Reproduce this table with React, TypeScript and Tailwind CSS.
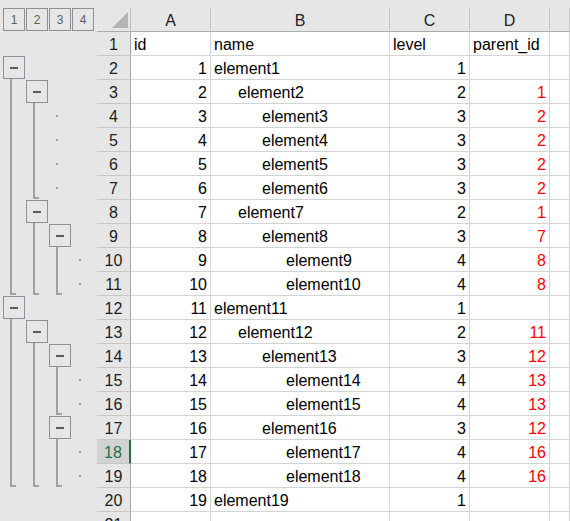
import React from 'react'

// [id, level, parent_id, outline slots] — slot codes: b=button, l=line, e=line end, d=dot, -=empty
const rows: Array<[number, number, number | '', string]> = [
    [1, 1, '', 'b---'],
    [2, 2, 1, 'lb--'],
    [3, 3, 2, 'lld-'],
    [4, 3, 2, 'lld-'],
    [5, 3, 2, 'lld-'],
    [6, 3, 2, 'led-'],
    [7, 2, 1, 'lb--'],
    [8, 3, 7, 'llb-'],
    [9, 4, 8, 'llld'],
    [10, 4, 8, 'eeed'],
    [11, 1, '', 'b---'],
    [12, 2, 11, 'lb--'],
    [13, 3, 12, 'llb-'],
    [14, 4, 13, 'llld'],
    [15, 4, 13, 'lled'],
    [16, 3, 12, 'llb-'],
    [17, 4, 16, 'llld'],
    [18, 4, 16, 'eeed'],
    [19, 1, '', '----'],
]

const indent = ['pl-[3px]', 'pl-[27px]', 'pl-[51px]', 'pl-[75px]']

function Slot({ kind }: { kind: string }) {
    if (kind === 'b') {
        return (
            <div className="w-[23px] h-full flex flex-col">
                <div className="w-[22px] h-[23px] shrink-0 border border-[#8b8f96] flex items-center justify-center">
                    <div className="w-[8px] h-[2px] bg-[#5c5c5c]"></div>
                </div>
                <div className="ml-[7px] w-[2px] flex-1 bg-[#a0a0a0]"></div>
            </div>
        )
    }
    if (kind === 'l') {
        return (
            <div className="w-[23px] h-full">
                <div className="ml-[7px] w-[2px] h-full bg-[#a0a0a0]"></div>
            </div>
        )
    }
    if (kind === 'e') {
        return (
            <div className="w-[23px] h-full">
                <div className="ml-[7px] w-[6px] h-[23px] border-l-2 border-b-2 border-[#a0a0a0]"></div>
            </div>
        )
    }
    if (kind === 'd') {
        return (
            <div className="w-[23px] h-full">
                <div className="ml-[7px] mt-[11px] w-[2px] h-[2px] bg-[#a0a0a0]"></div>
            </div>
        )
    }
    return <div className="w-[23px] h-full"></div>
}

function Row({ n, outline, selected, children }: { n: number; outline: string; selected?: boolean; children?: React.ReactNode }) {
    return (
        <div className="flex h-[24px] shrink-0">
            <div className="w-[97px] h-full flex pl-[3px] shrink-0">
                {outline.split('').map((k, i) => <Slot key={i} kind={k} />)}
            </div>
            {selected ? (
                <div className="w-[34px] h-full shrink-0 border-b border-b-[#c6c6c6] border-r-2 border-r-[#217346] bg-[#d2d2d2] text-center pt-[2px] leading-[21px] text-[#217346]">{n}</div>
            ) : (
                <div className="w-[34px] h-full shrink-0 border-b border-b-[#c6c6c6] border-r border-r-[#a6a6a6] text-center pt-[2px] leading-[21px] text-[#1e1e1e]">{n}</div>
            )}
            {children}
        </div>
    )
}

function Cell({ w, className = '', children }: { w: string; className?: string; children?: React.ReactNode }) {
    return (
        <div className={`${w} h-full shrink-0 bg-white border-r border-b border-[#d4d4d4] pt-[2px] leading-[21px] whitespace-nowrap overflow-hidden ${className}`}>
            {children}
        </div>
    )
}

function App() {
    return (
        <div className="w-[570px] h-[521px] overflow-hidden bg-[#e6e6e6] flex flex-col text-[16px] text-black font-['Liberation_Sans',Arial,sans-serif]">
            <div className="flex h-[32px] shrink-0">
                <div className="w-[97px] shrink-0 flex gap-px pl-[3px] pt-[8px]">
                    {[1, 2, 3, 4].map((l) => (
                        <div key={l} className="w-[22px] h-[23px] border border-[#8b8f96] flex items-center justify-center text-[12px] text-[#5e5e5e]">{l}</div>
                    ))}
                </div>
                <div className="flex-1 flex flex-col">
                    <div className="h-[8px]"></div>
                    <div className="flex h-[24px] text-[#222]">
                        <div className="w-[34px] shrink-0 border-r border-b border-r-[#c0c0c0] border-b-[#ababab] flex items-end justify-end pr-[2px] pb-[3px]">
                            <svg width="16" height="16" viewBox="0 0 16 16">
                                <polygon points="16,0 16,16 0,16" fill="#b4b4b4" />
                            </svg>
                        </div>
                        {[['A', 'w-[80px]'], ['B', 'w-[179px]'], ['C', 'w-[80px]'], ['D', 'w-[80px]'], ['', 'flex-1']].map(([c, w]) => (
                            <div key={c} className={`${w} shrink-0 border-r border-b border-r-[#c6c6c6] border-b-[#ababab] text-center pt-[2px] leading-[21px]`}>{c}</div>
                        ))}
                    </div>
                </div>
            </div>

            <Row n={1} outline="----">
                <Cell w="w-[80px]" className="pl-[3px]">id</Cell>
                <Cell w="w-[179px]" className="pl-[3px]">name</Cell>
                <Cell w="w-[80px]" className="pl-[3px]">level</Cell>
                <Cell w="w-[80px]" className="pl-[3px]">parent_id</Cell>
                <Cell w="flex-1"></Cell>
            </Row>

            {rows.map(([id, level, parent, outline]) => (
                <Row key={id} n={id + 1} outline={outline} selected={id + 1 === 18}>
                    <Cell w="w-[80px]" className="text-right pr-[3px]">{id}</Cell>
                    <Cell w="w-[179px]" className={indent[level - 1]}>element{id}</Cell>
                    <Cell w="w-[80px]" className="text-right pr-[3px]">{level}</Cell>
                    <Cell w="w-[80px]" className="text-right pr-[3px] text-[#ff0000]">{parent}</Cell>
                    <Cell w="flex-1"></Cell>
                </Row>
            ))}

            <Row n={21} outline="----">
                <Cell w="w-[80px]"></Cell>
                <Cell w="w-[179px]"></Cell>
                <Cell w="w-[80px]"></Cell>
                <Cell w="w-[80px]"></Cell>
                <Cell w="flex-1"></Cell>
            </Row>
        </div>
    )
}

export default App
